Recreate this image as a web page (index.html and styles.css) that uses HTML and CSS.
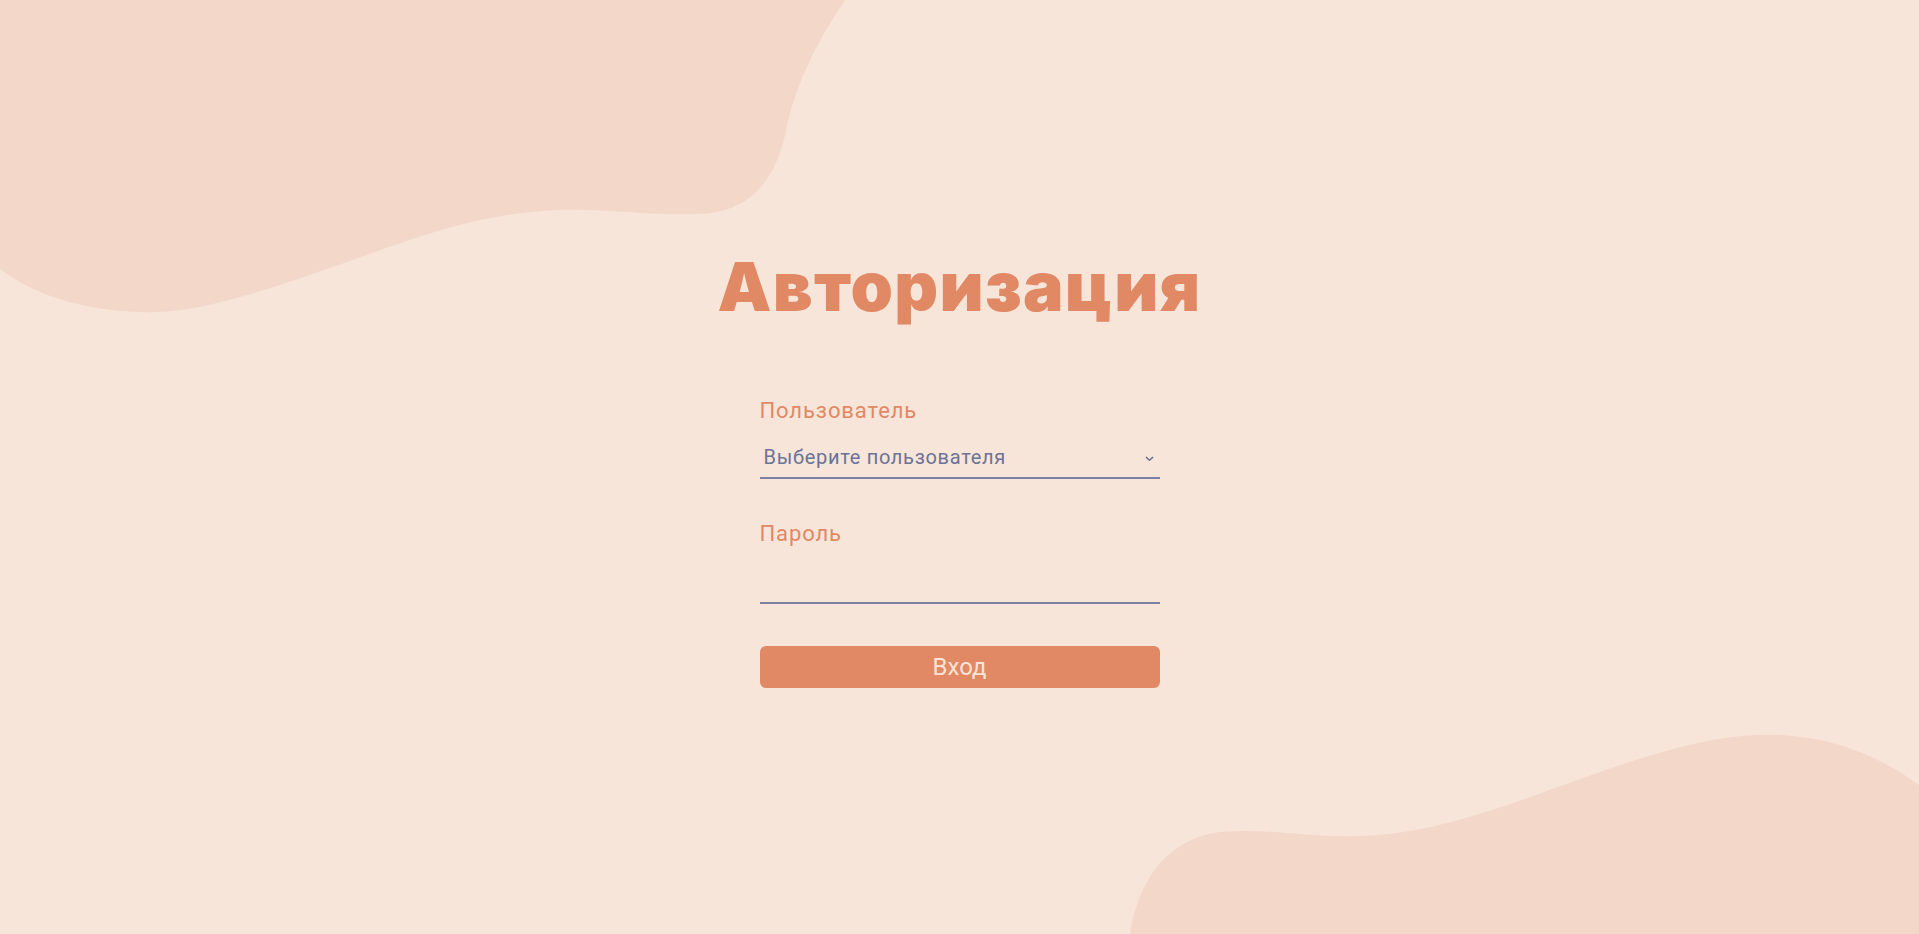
FILE: index.html
```html
<!DOCTYPE html>
<html lang="ru">
<head>
<meta charset="utf-8">
<title>Авторизация</title>
<link rel="stylesheet" href="styles.css">
</head>
<body>
<svg class="bg" viewBox="0 0 1919 934" preserveAspectRatio="none" aria-hidden="true">
  <path class="blob" d="M0,0 H845 C815,45 795,85 785,135 C775,180 750,212 700,214 C650,216 600,208 560,210 C470,214 410,240 330,268 C250,296 190,315 140,312 C80,310 35,295 0,269 Z"/>
  <path class="blob" d="M1919,934 H1130 C1137,890 1160,840 1220,832 C1270,828 1310,838 1360,836 C1440,834 1520,800 1600,772 C1680,744 1730,733 1780,735 C1840,738 1885,760 1919,785 Z"/>
</svg>
<main class="page">
  <h1 class="title">Авторизация</h1>
  <form class="form">
    <div class="field">
      <label class="label" for="user">Пользователь</label>
      <div class="select-wrap">
        <select id="user" class="control select">
          <option>Выберите пользователя</option>
        </select>
        <svg class="chevron" viewBox="0 0 10 6" aria-hidden="true"><path d="M1.5 1.2 L5 4.5 L8.5 1.2"/></svg>
      </div>
    </div>
    <div class="field">
      <label class="label" for="pass">Пароль</label>
      <input id="pass" class="control input" type="password">
    </div>
    <button type="button" class="btn">Вход</button>
  </form>
</main>
</body>
</html>
```
FILE: styles.css
```css
html, body {
  margin: 0;
  padding: 0;
  height: 100%;
}
body {
  background: #f7e5da;
  font-family: Roboto, "Noto Sans", "Liberation Sans", sans-serif;
  overflow: hidden;
  position: relative;
}
.bg {
  position: absolute;
  left: 0;
  top: 0;
  width: 100%;
  height: 100%;
  z-index: 0;
}
.blob {
  fill: #f3d8ca;
}
.page {
  position: relative;
  z-index: 1;
  display: flex;
  flex-direction: column;
  align-items: center;
  padding-top: 246px;
}
.title {
  margin: 0;
  font-family: Inter, "Noto Sans", sans-serif;
  font-weight: 900;
  font-size: 68px;
  line-height: 80px;
  color: #e08964;
  letter-spacing: 1.3px;
}
.form {
  width: 400px;
  margin-top: 72px;
  display: flex;
  flex-direction: column;
}
.field {
  display: flex;
  flex-direction: column;
  margin-bottom: 42px;
}
.label {
  font-size: 22px;
  line-height: 26px;
  color: #e08964;
  margin-bottom: 19px;
  letter-spacing: 0.9px;
}
.select-wrap {
  position: relative;
}
.control {
  display: block;
  width: 100%;
  box-sizing: border-box;
  height: 36px;
  margin: 0;
  background: transparent;
  border: none;
  border-bottom: 2px solid #7a80a3;
  border-radius: 0;
  outline: none;
  font-family: Roboto, "Noto Sans", sans-serif;
  font-size: 20px;
  letter-spacing: 0.7px;
  color: #6b7396;
  padding: 2px 4px 8px 4px;
}
.input {
  height: 38px;
}
.select {
  -webkit-appearance: none;
  appearance: none;
}
.chevron {
  position: absolute;
  right: 6px;
  top: 13px;
  width: 9px;
  height: 6px;
  fill: none;
  stroke: #6b7396;
  stroke-width: 1.6;
  stroke-linecap: round;
  stroke-linejoin: round;
  pointer-events: none;
}
.btn {
  height: 42px;
  width: 100%;
  border: none;
  border-radius: 6px;
  background: #e08964;
  color: #fbe3d6;
  font-family: Roboto, "Noto Sans", sans-serif;
  font-size: 24px;
  padding: 0;
  cursor: pointer;
}
```
